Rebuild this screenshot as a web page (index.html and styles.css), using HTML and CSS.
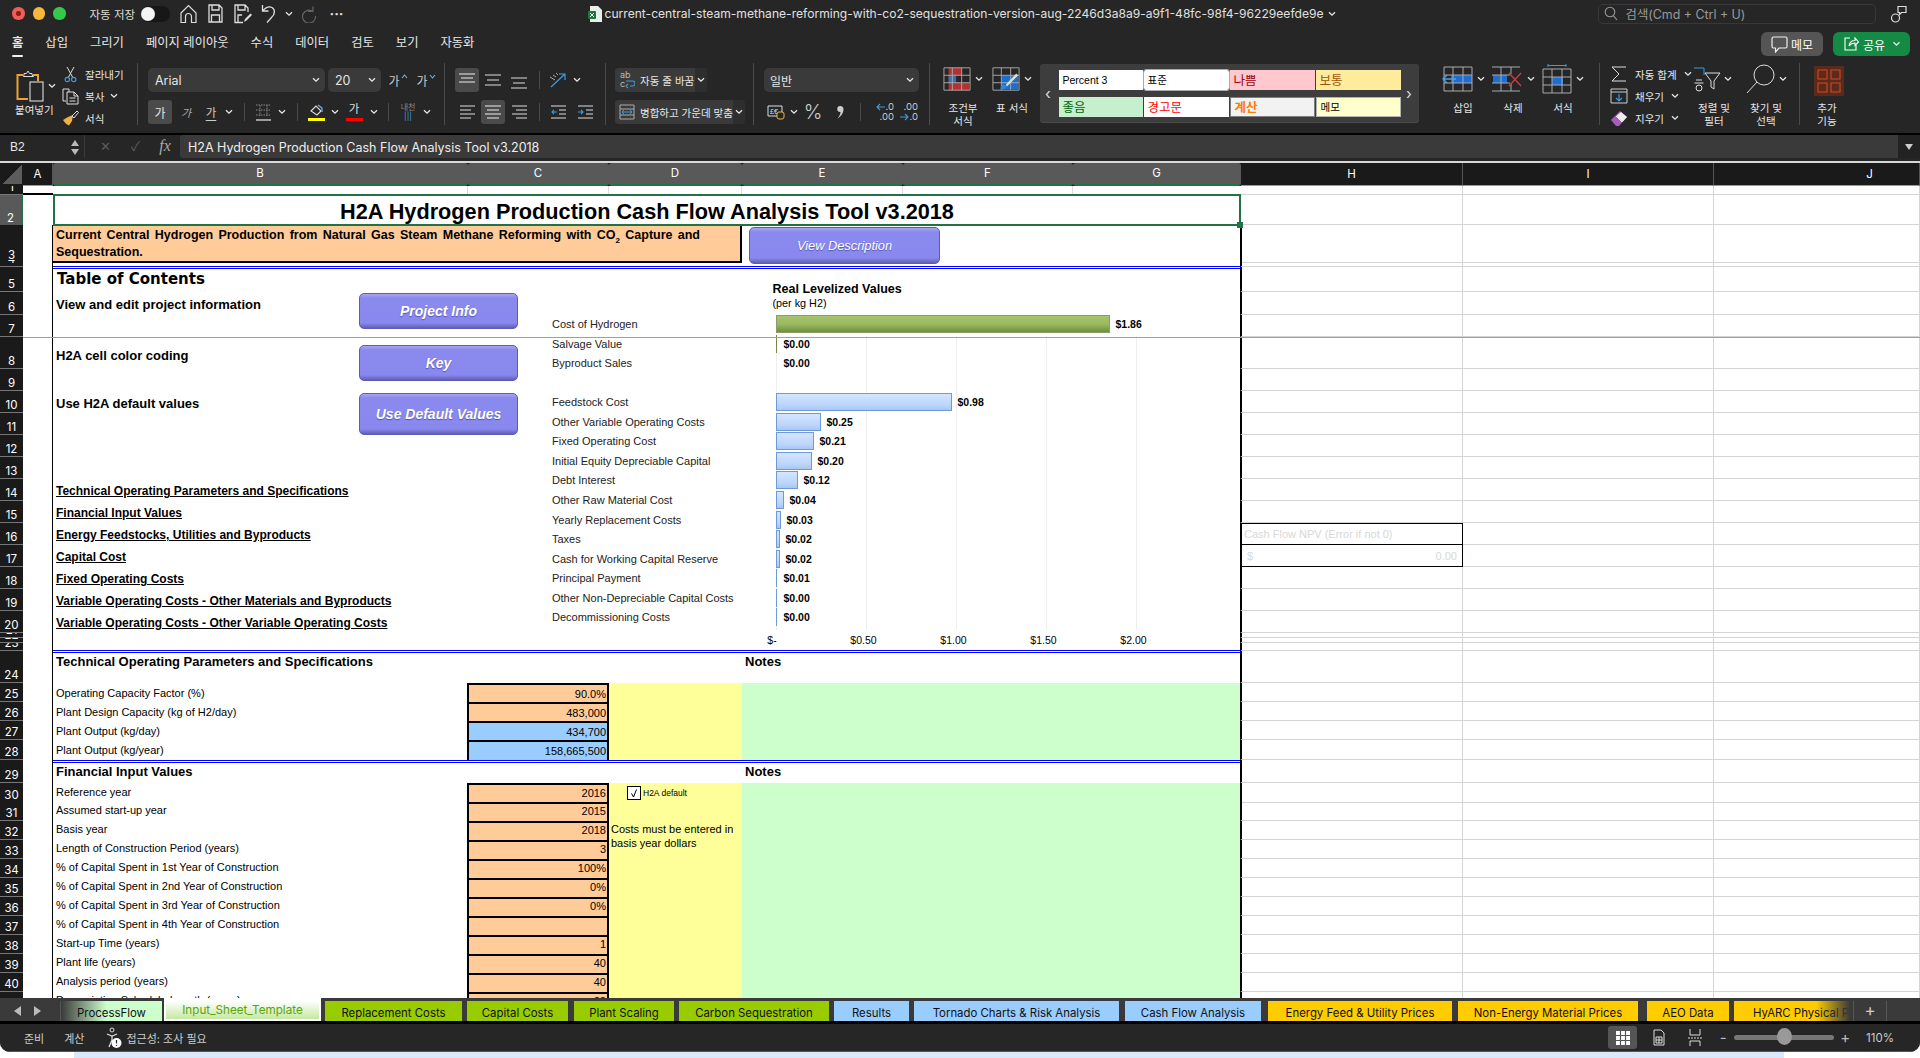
FILE: index.html
```html
<!DOCTYPE html>
<html lang="ko">
<head>
<meta charset="utf-8">
<title>H2A Hydrogen Production Cash Flow Analysis Tool</title>
<link rel="stylesheet" href="styles.css">
</head>
<body>
<svg class="sprite" width="0" height="0">
  <symbol id="chev" viewBox="0 0 8 6"><path d="M1 1.2l3 3 3-3" fill="none" stroke="#e8e8e8" stroke-width="1.3"/></symbol>
</svg>
<div class="app">
  <header class="titlebar">
    <div class="lights"><span class="light red"></span><span class="light amber"></span><span class="light green"></span></div>
    <span class="autosave">자동 저장</span>
    <span class="toggle"><i></i></span>
    <span class="tool w26"><svg width="17" height="20" viewBox="0 0 17 20"><path d="M1 9L8.500 1.500 16 9v9.500h-4.500V12.500a3 3 0 0 0-6 0v6H1z" fill="none" stroke="#ddd" stroke-width="1.200"/></svg></span>
    <span class="tool w27"><svg width="15" height="19" viewBox="0 0 15 19"><path d="M1 1h10l3 3v14H1zM4 1v5h7V1M3.500 18v-7h8v7" fill="none" stroke="#ddd" stroke-width="1.300"/></svg></span>
    <span class="tool w28"><svg width="18" height="20" viewBox="0 0 18 20"><path d="M9 18.500H1V1h10l3 3v4M4 1v5h7V1M4 18v-7h4" fill="none" stroke="#ddd" stroke-width="1.300"/><path d="M10 18l1-3 5.500-5.500 1.500 1.500-5.500 5.500z" fill="#ddd"/></svg></span>
    <span class="tool w24"><svg width="15" height="20" viewBox="0 0 15 20"><path d="M1.500 1v6h6M1.500 7C5 3 8 1.800 11 3.500c3.500 2 3 7-.5 10L6 18.500" fill="none" stroke="#ddd" stroke-width="1.300"/></svg></span>
    <span class="tool w16"><svg class="ch" width="8" height="6"><use href="#chev"/></svg></span>
    <span class="tool w26"><svg width="15" height="18" viewBox="0 0 15 18"><path d="M11 1.500v5H6M11 6.500A6.500 6.500 0 1 0 13.500 11" fill="none" stroke="#666" stroke-width="1.200"/></svg></span>
    <span class="tool w28 dots">···</span>
    <div class="doc">
      <svg class="ch" width="15" height="18" viewBox="0 0 15 18"><path d="M2 1h8l4 4v12H2z" fill="#e8efe9"/><rect x="0" y="6" width="8" height="8" rx="1" fill="#217346"/><path d="M2 8l4 4M6 8l-4 4" stroke="#fff"/></svg>
      <span class="docname">current-central-steam-methane-reforming-with-co2-sequestration-version-aug-2246d3a8a9-a9f1-48fc-98f4-96229eefde9e</span>
      <svg class="ch" width="8" height="6"><use href="#chev"/></svg>
    </div>
    <div class="search">
      <svg class="ch" width="14" height="15" viewBox="0 0 14 15"><circle cx="6" cy="6" r="4.800" fill="none" stroke="#999" stroke-width="1.100"/><path d="M9.500 9.800l3.500 4.200" stroke="#999" stroke-width="1.100"/></svg>
      <span>검색(Cmd + Ctrl + U)</span>
    </div>
    <span class="tool w26 person"><svg width="18" height="20" viewBox="0 0 18 20"><circle cx="5.500" cy="14" r="4" fill="none" stroke="#ddd" stroke-width="1.200"/><path d="M8 2.500h8v6H11.500L9.500 10.500V8.500H8z" fill="none" stroke="#ddd" stroke-width="1.200"/></svg></span>
  </header>

  <nav class="tabs">
    <span class="rtab on">홈</span><span class="rtab">삽입</span><span class="rtab">그리기</span><span class="rtab">페이지 레이아웃</span><span class="rtab">수식</span><span class="rtab">데이터</span><span class="rtab">검토</span><span class="rtab">보기</span><span class="rtab">자동화</span>
    <div class="tabs-right">
      <span class="memo"><svg width="17" height="17" viewBox="0 0 17 17"><path d="M1 2.500A1.500 1.500 0 0 1 2.500 1h12A1.500 1.500 0 0 1 16 2.500v8A1.500 1.500 0 0 1 14.500 12H8l-3.500 4v-4h-2A1.500 1.500 0 0 1 1 10.500z" fill="none" stroke="#eee" stroke-width="1.200"/></svg>메모</span>
      <span class="share"><svg width="16" height="16" viewBox="0 0 16 16"><path d="M7 2H2v12h11V9M6 10c.5-3.500 3-5.500 6-5.500V2l3.500 4L12 9.500V7c-2.500 0-4.500 1-6 3z" fill="none" stroke="#fff" stroke-width="1.100"/></svg>공유<svg class="ch" width="9" height="6"><use href="#chev"/></svg></span>
    </div>
  </nav>

  <section class="ribbon">
    <div class="grp g-clip">
      <div class="paste">
        <div class="paste-ic">
          <svg width="30" height="33" viewBox="0 0 30 33"><path d="M7 5H1.500v24H12M17 5h5v6" fill="none" stroke="#f0a030" stroke-width="2"/><path d="M8 5V3.500h2.500L12 1l1.500 2.500H16V5l1.500 1.500h-10z" fill="none" stroke="#ddd" stroke-width="1"/><rect x="14" y="12" width="13" height="19" fill="#262626" stroke="#ddd" stroke-width="1.100"/></svg>
          <svg class="ch" width="8" height="6"><use href="#chev"/></svg>
        </div>
        <span class="lbl">붙여넣기</span>
      </div>
      <div class="clip-list">
        <div class="clip-item"><svg width="12" height="17" viewBox="0 0 12 17"><path d="M2.500 1L8 11M9.500 1L4 11" stroke="#ddd" stroke-width="1"/><circle cx="2.800" cy="13.500" r="2.200" fill="none" stroke="#3b9ce0" stroke-width="1.200"/><circle cx="9.200" cy="13.500" r="2.200" fill="none" stroke="#3b9ce0" stroke-width="1.200"/></svg><span>잘라내기</span></div>
        <div class="clip-item"><svg width="17" height="17" viewBox="0 0 17 17"><path d="M4 13H1V1h6v3M5 4h7l4 4v8H5zM12 4v4h4M7.500 10h6M7.500 13h6" fill="none" stroke="#ddd" stroke-width="1"/></svg><span>복사</span><svg class="ch" width="8" height="6"><use href="#chev"/></svg></div>
        <div class="clip-item"><svg width="17" height="16" viewBox="0 0 17 16"><path d="M11 5l-5 2-5 3c2 3 4 5 6 5.500l3-4.500z" fill="#f0b040"/><path d="M10 6l2 2 4.500-5.500L15 1z" fill="none" stroke="#ddd" stroke-width="1"/></svg><span>서식</span></div>
      </div>
    </div>
    <div class="grp g-font">
      <div class="grow">
        <span class="box w177"><span>Arial</span><svg class="ch" width="8" height="6"><use href="#chev"/></svg></span>
        <span class="box w53"><span>20</span><svg class="ch" width="8" height="6"><use href="#chev"/></svg></span>
        <span class="tool w28 g-ic">가<svg class="caret" width="7" height="5" viewBox="0 0 7 5"><path d="M1 4l2.500-3L6 4" fill="none" stroke="#6ab7f0" stroke-width="1.100"/></svg></span>
        <span class="tool w28 g-ic">가<svg class="caret" width="7" height="5" viewBox="0 0 7 5"><path d="M1 1l2.500 3L6 1" fill="none" stroke="#6ab7f0" stroke-width="1.100"/></svg></span>
      </div>
      <div class="grow">
        <span class="tool w24 act">가</span>
        <span class="tool w28 g-i">가</span>
        <span class="tool w22 g-u">가</span>
        <span class="tool w14"><svg class="ch" width="8" height="6"><use href="#chev"/></svg></span>
        <span class="vsep w16"></span>
        <span class="tool w22"><svg width="17" height="17" viewBox="0 0 17 17"><path d="M1 1h15M1 6h15M1 11h15M5 1v11M12 1v11" fill="none" stroke="#888" stroke-width="1" stroke-dasharray="1.500 1"/><path d="M1 16h15" stroke="#eee" stroke-width="1.200"/></svg></span>
        <span class="tool w16"><svg class="ch" width="8" height="6"><use href="#chev"/></svg></span>
        <span class="vsep w14"></span>
        <span class="tool w25 colorbtn"><svg width="14" height="12" viewBox="0 0 14 12"><path d="M1 7l5-5 5 5-4 4z" fill="none" stroke="#ddd" stroke-width="1.100"/><path d="M8 1l4 3v4" fill="none" stroke="#6ab7f0" stroke-width="1.200"/></svg><i class="bar yellow"></i></span>
        <span class="tool w12"><svg class="ch" width="8" height="6"><use href="#chev"/></svg></span>
        <span class="tool w26 colorbtn font-c"><b>가</b><i class="bar redbar"></i></span>
        <span class="tool w13"><svg class="ch" width="8" height="6"><use href="#chev"/></svg></span>
        <span class="vsep w16"></span>
        <span class="tool w24 phon">내천<em>|||</em></span>
        <span class="tool w13"><svg class="ch" width="8" height="6"><use href="#chev"/></svg></span>
      </div>
    </div>
    <div class="grp g-align">
      <div class="grow">
        <span class="tool w24 act"><svg width="16" height="14" viewBox="0 0 16 14"><path d="M0 1h16M2 5h12M0 9h16" stroke="#eee"/></svg></span>
        <span class="tool w27"><svg width="16" height="12" viewBox="0 0 16 12"><path d="M0 1h16M2 6h12M0 11h16" stroke="#ddd"/></svg></span>
        <span class="tool w26"><svg class="dn" width="16" height="12" viewBox="0 0 16 12"><path d="M0 1h16M2 6h12M0 11h16" stroke="#ddd"/></svg></span>
        <span class="vsep w14"></span>
        <span class="tool w24"><svg width="18" height="16" viewBox="0 0 18 16"><path d="M2 15L16 2M10 2h6v6" fill="none" stroke="#3b9ce0" stroke-width="1.200"/><path d="M1 5l5 3M4 3l3 2M7 1l2 2" stroke="#aaa"/></svg></span>
        <span class="tool w14"><svg class="ch" width="8" height="6"><use href="#chev"/></svg></span>
      </div>
      <div class="grow">
        <span class="tool w26"><svg width="16" height="14" viewBox="0 0 16 14"><path d="M0 1h15M0 5h11M0 9h15M0 13h11" stroke="#ddd"/></svg></span>
        <span class="tool w24 act"><svg width="16" height="14" viewBox="0 0 16 14"><path d="M0 1h16M2 5h12M0 9h16M2 13h12" stroke="#eee"/></svg></span>
        <span class="tool w27"><svg width="16" height="14" viewBox="0 0 16 14"><path d="M1 1h15M5 5h11M1 9h15M5 13h11" stroke="#ddd"/></svg></span>
        <span class="vsep w14"></span>
        <span class="tool w26"><svg width="16" height="14" viewBox="0 0 16 14"><path d="M0 1h15M8 5h7M8 9h7M0 13h15" stroke="#ddd"/><path d="M6 7H1M3 5L1 7l2 2" fill="none" stroke="#3b9ce0" stroke-width="1.100"/></svg></span>
        <span class="tool w26"><svg width="16" height="14" viewBox="0 0 16 14"><path d="M1 1h15M9 5h7M9 9h7M1 13h15" stroke="#ddd"/><path d="M1 7h5M4 5l2 2-2 2" fill="none" stroke="#3b9ce0" stroke-width="1.100"/></svg></span>
      </div>
    </div>
    <div class="grp g-wrap">
      <div class="grow">
        <span class="box2 w92">
          <svg width="15" height="17" viewBox="0 0 15 17"><path d="M10 13h2.500a2.500 2.500 0 0 0 0-5H6M8 11l-2 2 2 2" fill="none" stroke="#3b9ce0" stroke-width="1.100"/></svg>
          <span class="ab">ab<br>c</span>
          <span class="btxt">자동 줄 바꿈</span><span class="chw"><svg class="ch" width="8" height="6"><use href="#chev"/></svg></span>
        </span>
      </div>
      <div class="grow">
        <span class="box2 w127">
          <svg class="mrg" width="16" height="16" viewBox="0 0 16 16"><path d="M1 1h14v14H1zM1 5h14M1 11h14" fill="none" stroke="#aaa"/><path d="M3 8h10M5 6L3 8l2 2M11 6l2 2-2 2" fill="none" stroke="#3b9ce0"/></svg>
          <span class="btxt">병합하고 가운데 맞춤</span><span class="chw"><svg class="ch" width="8" height="6"><use href="#chev"/></svg></span>
        </span>
      </div>
    </div>
    <div class="grp g-num">
      <div class="grow">
        <span class="box w155"><span class="kr">일반</span><svg class="ch" width="8" height="6"><use href="#chev"/></svg></span>
      </div>
      <div class="grow">
        <span class="tool w24"><svg width="18" height="16" viewBox="0 0 18 16"><path d="M1 2h14v10H1z" fill="none" stroke="#ddd"/><text class="svgt" x="3" y="10">£€</text><rect x="10" y="8" width="7" height="7" rx="2" fill="#262626" stroke="#e8b840"/></svg></span>
        <span class="tool w12"><svg class="ch" width="8" height="6"><use href="#chev"/></svg></span>
        <span class="tool w26 pct">%</span>
        <span class="tool w28"><svg width="8" height="14" viewBox="0 0 8 14"><path d="M4 1a3 3 0 0 1 3.500 3c0 4-2.500 7.500-6 9.500C3.500 11 4.500 9 4.500 7A3 3 0 0 1 4 1z" fill="#ccc"/></svg></span>
        <span class="vsep w12"></span>
        <span class="tool w28 dec"><span class="dr"><svg width="11" height="8" viewBox="0 0 11 8"><path d="M10 4H2M5 1L2 4l3 3" fill="none" stroke="#3b9ce0" stroke-width="1.100"/></svg>.0</span><span>.00</span></span>
        <span class="tool w24 dec"><span>.00</span><span class="dr"><svg width="11" height="8" viewBox="0 0 11 8"><path d="M1 4h8M6 1l3 3-3 3" fill="none" stroke="#3b9ce0" stroke-width="1.100"/></svg>.0</span></span>
      </div>
    </div>
    <div class="grp g-style">
      <div class="col40">
        <div class="big-ic"><svg width="30" height="26" viewBox="0 0 30 26"><path d="M6 1h14v8h-6v8h14v8H6z" fill="#b23232"/><rect x="6" y="9" width="8" height="8" fill="#2e75b6"/><path d="M1 1h28v24H1zM1 9h28M1 17h28M10 1v24M20 1v24" fill="none" stroke="#aaa"/></svg><svg class="ch" width="8" height="6"><use href="#chev"/></svg></div>
        <span class="lbl">조건부<br>서식</span>
      </div>
      <div class="col40">
        <div class="big-ic"><svg width="30" height="26" viewBox="0 0 30 26"><rect x="10" y="9" width="18" height="15" fill="#1c6fd0"/><path d="M1 1h28v24H1zM1 9h28M1 17h28M10 1v24M20 1v24" fill="none" stroke="#aaa"/><path d="M9 24c0-5 4-6 6-4 1 2-1 5-6 4z" fill="#2e86d6"/><path d="M15 19L26 7l2 2-12 12" fill="#ddd"/></svg><svg class="ch" width="8" height="6"><use href="#chev"/></svg></div>
        <span class="lbl">표 서식</span>
      </div>
    </div>
    <div class="gallery">
      <span class="gal-arrow">‹</span>
      <div class="gal-grid">
        <span class="st st-a">Percent 3</span>
        <span class="st st-sel">표준</span>
        <span class="st st-bad">나쁨</span>
        <span class="st st-neu">보통</span>
        <span class="st st-good">좋음</span>
        <span class="st st-warn">경고문</span>
        <span class="st st-calc">계산</span>
        <span class="st st-note">메모</span>
      </div>
      <span class="gal-arrow">›</span>
    </div>
    <div class="grp g-cells">
      <div class="col50">
        <div class="big-ic"><svg width="31" height="26" viewBox="0 0 31 26"><rect x="9" y="9" width="21" height="8" fill="#1c6fd0"/><path d="M2 1h28v24H2zM2 9h28M2 17h28M11 1v24M21 1v24" fill="none" stroke="#aaa"/><path d="M14 13H1M5 9l-4 4 4 4" fill="none" stroke="#4da3e8" stroke-width="1.300"/></svg><svg class="ch" width="8" height="6"><use href="#chev"/></svg></div>
        <span class="lbl">삽입</span>
      </div>
      <div class="col50">
        <div class="big-ic"><svg width="32" height="26" viewBox="0 0 32 26"><rect x="2" y="9" width="14" height="8" fill="#1c6fd0"/><path d="M1 1h28M1 9h18M1 17h18M1 25h28M10 1v24M20 1v7M20 18v7" fill="none" stroke="#aaa"/><path d="M18 7l12 13M30 7L18 20" stroke="#d04040" stroke-width="1.200"/></svg><svg class="ch" width="8" height="6"><use href="#chev"/></svg></div>
        <span class="lbl">삭제</span>
      </div>
      <div class="col50">
        <div class="big-ic"><svg width="30" height="30" viewBox="0 0 30 30"><path d="M6 1.500h18M6 0v3M24 0v3" stroke="#3b9ce0"/><rect x="10" y="13" width="11" height="8" fill="#1c6fd0"/><path d="M1 5h28v24H1zM1 13h28M1 21h28M10 5v24M20 5v24" fill="none" stroke="#aaa"/></svg><svg class="ch" width="8" height="6"><use href="#chev"/></svg></div>
        <span class="lbl">서식</span>
      </div>
    </div>
    <div class="grp g-edit">
      <div class="edit-list">
        <div class="edit-item"><svg width="18" height="16" viewBox="0 0 18 16"><path d="M16 1H2l7 7-7 7h14" fill="none" stroke="#ddd"/></svg><span>자동 합계</span><svg class="ch" width="8" height="6"><use href="#chev"/></svg></div>
        <div class="edit-item"><svg width="18" height="16" viewBox="0 0 18 16"><path d="M1 1h16v14H1zM1 4h16" fill="none" stroke="#ccc"/><path d="M9 6v7M6 10l3 3 3-3" fill="none" stroke="#3b9ce0" stroke-width="1.200"/></svg><span>채우기</span><svg class="ch" width="8" height="6"><use href="#chev"/></svg></div>
        <div class="edit-item"><svg width="18" height="17" viewBox="0 0 18 17"><path d="M1 10L10 1l7 6-8 9H6z" fill="#a85cc0"/><path d="M6 6l6 6" stroke="#eee"/><path d="M11 2l6 5-4.500 5-6-6z" fill="#eee"/></svg><span>지우기</span><svg class="ch" width="8" height="6"><use href="#chev"/></svg></div>
      </div>
      <div class="col42">
        <div class="big-ic"><svg width="28" height="28" viewBox="0 0 28 28"><path d="M1 3h10v7" fill="none" stroke="#3b9ce0"/><path d="M12 8h15l-6 8v8l-3-2v-6z" fill="none" stroke="#ddd"/><path d="M3 15h6M1.500 18h9" stroke="#ddd"/><circle cx="6" cy="23" r="3" fill="none" stroke="#ddd"/></svg><svg class="ch" width="8" height="6"><use href="#chev"/></svg></div>
        <span class="lbl">정렬 및<br>필터</span>
      </div>
      <div class="col42 find">
        <div class="big-ic"><svg width="30" height="30" viewBox="0 0 30 30"><circle cx="18" cy="11" r="10" fill="none" stroke="#ddd"/><path d="M11 18L1 29" stroke="#ddd"/></svg><svg class="ch" width="8" height="6"><use href="#chev"/></svg></div>
        <span class="lbl">찾기 및<br>선택</span>
      </div>
    </div>
    <div class="grp g-add">
      <div class="col50">
        <svg class="addin" width="30" height="30" viewBox="0 0 30 30"><rect width="30" height="30" rx="1" fill="#5a2a1c"/><path d="M4 4h9v9H4zM17 4h9v9h-9zM4 17h9v9H4zM17 17h9v9h-9z" fill="none" stroke="#d04a20" stroke-width="1.100"/></svg>
        <span class="lbl">추가<br>기능</span>
      </div>
    </div>
  </section>

  <div class="formula">
    <div class="namebox"><span>B2</span><span class="stepper"><i class="up"></i><i class="down"></i></span></div>
    <span class="fx-x">✕</span><span class="fx-ok">✓</span><span class="fx">fx</span>
    <div class="finput"><span class="ftext">H2A Hydrogen Production Cash Flow Analysis Tool v3.2018</span><span class="fexpand"></span></div>
  </div>

  <main class="sheet">
    <div class="row colhead">
      <div class="corner"></div>
      <div class="ch-k">A</div><div class="ch-k act">B</div><div class="ch-k act">C</div><div class="ch-k act">D</div><div class="ch-k act">E</div><div class="ch-k act">F</div><div class="ch-k act">G</div><div class="ch-k">H</div><div class="ch-k">I</div><div class="ch-k ch-j">J</div>
    </div>

    <div class="row r9"><div class="rh">1</div><div class="a a-end"></div><div class="cB gridr"></div><div class="cC gridr"></div><div class="cD gridr"></div><div class="cE gridr"></div><div class="cF gridr"></div><div class="cG"></div><div class="gh nb"></div><div class="gi"></div><div class="gj"></div></div>
    <div class="row r30"><div class="rh sel">2</div><div class="a noline"></div><div class="cBG title">H2A Hydrogen Production Cash Flow Analysis Tool v3.2018</div><div class="gh nb"></div><div class="gi"></div><div class="gj"></div></div>
    <div class="row r35"><div class="rh">3</div><div class="a"></div><div class="cBD subtitle"><span>Current Central Hydrogen Production from Natural Gas Steam Methane Reforming with CO<sub>2</sub> Capture and Sequestration.</span></div><div class="gh"></div><div class="gi"></div><div class="gj"></div></div>
    <div class="row r7"><div class="rh">4</div><div class="a"></div><div class="gh"></div><div class="gi"></div><div class="gj"></div></div>
    <div class="row r25"><div class="rh">5</div><div class="a"></div><div class="cBG dbl toc">Table of Contents</div><div class="gh"></div><div class="gi"></div><div class="gj"></div></div>
    <div class="row r23"><div class="rh">6</div><div class="a"></div><div class="cB bold">View and edit project information</div><div class="gh"></div><div class="gi"></div><div class="gj"></div></div>
    <div class="row r22"><div class="rh">7</div><div class="a"></div><div class="gh"></div><div class="gi"></div><div class="gj"></div></div>
    <div class="row r32"><div class="rh">8</div><div class="a"></div><div class="cB bold lift">H2A cell color coding</div><div class="gh"></div><div class="gi"></div><div class="gj"></div></div>
    <div class="row r22"><div class="rh">9</div><div class="a"></div><div class="gh"></div><div class="gi"></div><div class="gj"></div></div>
    <div class="row r22"><div class="rh">10</div><div class="a"></div><div class="cB bold">Use H2A default values</div><div class="gh"></div><div class="gi"></div><div class="gj"></div></div>
    <div class="row r22"><div class="rh">11</div><div class="a"></div><div class="gh"></div><div class="gi"></div><div class="gj"></div></div>
    <div class="row r22"><div class="rh">12</div><div class="a"></div><div class="gh"></div><div class="gi"></div><div class="gj"></div></div>
    <div class="row r22"><div class="rh">13</div><div class="a"></div><div class="gh"></div><div class="gi"></div><div class="gj"></div></div>
    <div class="row r22"><div class="rh">14</div><div class="a"></div><div class="cB link">Technical Operating Parameters and Specifications</div><div class="gh"></div><div class="gi"></div><div class="gj"></div></div>
    <div class="row r22"><div class="rh">15</div><div class="a"></div><div class="cB link">Financial Input Values</div><div class="gh"></div><div class="gi"></div><div class="gj"></div></div>
    <div class="row r22"><div class="rh">16</div><div class="a"></div><div class="cB link">Energy Feedstocks, Utilities and Byproducts</div><div class="gh npv-t">Cash Flow NPV (Error if not 0)</div><div class="gi"></div><div class="gj"></div></div>
    <div class="row r22"><div class="rh">17</div><div class="a"></div><div class="cB link">Capital Cost</div><div class="gh npv-v"><span>$</span><span>0.00</span></div><div class="gi"></div><div class="gj"></div></div>
    <div class="row r22"><div class="rh">18</div><div class="a"></div><div class="cB link">Fixed Operating Costs</div><div class="gh"></div><div class="gi"></div><div class="gj"></div></div>
    <div class="row r22"><div class="rh">19</div><div class="a"></div><div class="cB link">Variable Operating Costs - Other Materials and Byproducts</div><div class="gh"></div><div class="gi"></div><div class="gj"></div></div>
    <div class="row r22"><div class="rh">20</div><div class="a"></div><div class="cB link">Variable Operating Costs - Other Variable Operating Costs</div><div class="gh"></div><div class="gi"></div><div class="gj"></div></div>
    <div class="row r5"><div class="rh">21</div><div class="a"></div><div class="gh"></div><div class="gi"></div><div class="gj"></div></div>
    <div class="row r5"><div class="rh">22</div><div class="a"></div><div class="gh"></div><div class="gi"></div><div class="gj"></div></div>
    <div class="row r8"><div class="rh">23</div><div class="a"></div><div class="gh"></div><div class="gi"></div><div class="gj"></div></div>
    <div class="row r32"><div class="rh">24</div><div class="a"></div><div class="cB dbl bold sect">Technical Operating Parameters and Specifications</div><div class="cC dbl"></div><div class="cD dbl"></div><div class="cEG-n dbl bold sect">Notes</div><div class="gh"></div><div class="gi"></div><div class="gj"></div></div>
    <div class="row r19"><div class="rh">25</div><div class="a"></div><div class="cB">Operating Capacity Factor (%)</div><div class="cC inp">90.0%</div><div class="cD ye"></div><div class="cEG gr"></div><div class="gh"></div><div class="gi"></div><div class="gj"></div></div>
    <div class="row r19"><div class="rh">26</div><div class="a"></div><div class="cB">Plant Design Capacity (kg of H2/day)</div><div class="cC inp">483,000</div><div class="cD ye"></div><div class="cEG gr"></div><div class="gh"></div><div class="gi"></div><div class="gj"></div></div>
    <div class="row r19"><div class="rh">27</div><div class="a"></div><div class="cB">Plant Output (kg/day)</div><div class="cC inp calc">434,700</div><div class="cD ye"></div><div class="cEG gr"></div><div class="gh"></div><div class="gi"></div><div class="gj"></div></div>
    <div class="row r20"><div class="rh">28</div><div class="a"></div><div class="cB">Plant Output (kg/year)</div><div class="cC inp calc">158,665,500</div><div class="cD ye"></div><div class="cEG gr"></div><div class="gh"></div><div class="gi"></div><div class="gj"></div></div>
    <div class="row r23"><div class="rh">29</div><div class="a"></div><div class="cB dbl0 bold fin">Financial Input Values</div><div class="cC dbl0"></div><div class="cD dbl0"></div><div class="cEG-n dbl0 bold fin">Notes</div><div class="gh"></div><div class="gi"></div><div class="gj"></div></div>
    <div class="row r19 f"><div class="rh">30</div><div class="a"></div><div class="cB">Reference year</div><div class="cC inp">2016</div><div class="cD ye"><span class="check"><svg width="10" height="10" viewBox="0 0 10 10"><path d="M2.500 5.500L4.500 9 7.500 1.500" fill="none" stroke="#000" stroke-width="1"/></svg></span><span class="chk-l">H2A default</span></div><div class="cEG gr"></div><div class="gh"></div><div class="gi"></div><div class="gj"></div></div>
    <div class="row r19 f"><div class="rh">31</div><div class="a"></div><div class="cB">Assumed start-up year</div><div class="cC inp">2015</div><div class="cD ye"></div><div class="cEG gr"></div><div class="gh"></div><div class="gi"></div><div class="gj"></div></div>
    <div class="row r19 f"><div class="rh">32</div><div class="a"></div><div class="cB">Basis year</div><div class="cC inp">2018</div><div class="cD ye">Costs must be entered in</div><div class="cEG gr"></div><div class="gh"></div><div class="gi"></div><div class="gj"></div></div>
    <div class="row r19 f"><div class="rh">33</div><div class="a"></div><div class="cB">Length of Construction Period (years)</div><div class="cC inp">3</div><div class="cD ye note-b">basis year dollars</div><div class="cEG gr"></div><div class="gh"></div><div class="gi"></div><div class="gj"></div></div>
    <div class="row r19 f"><div class="rh">34</div><div class="a"></div><div class="cB">% of Capital Spent in 1st Year of Construction</div><div class="cC inp">100%</div><div class="cD ye"></div><div class="cEG gr"></div><div class="gh"></div><div class="gi"></div><div class="gj"></div></div>
    <div class="row r19 f"><div class="rh">35</div><div class="a"></div><div class="cB">% of Capital Spent in 2nd Year of Construction</div><div class="cC inp">0%</div><div class="cD ye"></div><div class="cEG gr"></div><div class="gh"></div><div class="gi"></div><div class="gj"></div></div>
    <div class="row r19 f"><div class="rh">36</div><div class="a"></div><div class="cB">% of Capital Spent in 3rd Year of Construction</div><div class="cC inp">0%</div><div class="cD ye"></div><div class="cEG gr"></div><div class="gh"></div><div class="gi"></div><div class="gj"></div></div>
    <div class="row r19 f"><div class="rh">37</div><div class="a"></div><div class="cB">% of Capital Spent in 4th Year of Construction</div><div class="cC inp"></div><div class="cD ye"></div><div class="cEG gr"></div><div class="gh"></div><div class="gi"></div><div class="gj"></div></div>
    <div class="row r19 f"><div class="rh">38</div><div class="a"></div><div class="cB">Start-up Time (years)</div><div class="cC inp">1</div><div class="cD ye"></div><div class="cEG gr"></div><div class="gh"></div><div class="gi"></div><div class="gj"></div></div>
    <div class="row r19 f"><div class="rh">39</div><div class="a"></div><div class="cB">Plant life (years)</div><div class="cC inp">40</div><div class="cD ye"></div><div class="cEG gr"></div><div class="gh"></div><div class="gi"></div><div class="gj"></div></div>
    <div class="row r19 f"><div class="rh">40</div><div class="a"></div><div class="cB">Analysis period (years)</div><div class="cC inp">40</div><div class="cD ye"></div><div class="cEG gr"></div><div class="gh"></div><div class="gi"></div><div class="gj"></div></div>
    <div class="row r19 f"><div class="rh">41</div><div class="a"></div><div class="cB">Depreciation Schedule Length (years)</div><div class="cC inp">20</div><div class="cD ye"></div><div class="cEG gr"></div><div class="gh"></div><div class="gi"></div><div class="gj"></div></div>

    <!-- floating objects on the worksheet -->
    <div class="selection"><i></i></div>
    <button class="xbtn b-view">View Description</button>
    <button class="xbtn strong b-proj">Project Info</button>
    <button class="xbtn strong b-key">Key</button>
    <button class="xbtn strong b-def">Use Default Values</button>

    <div class="chart">
      <div class="chart-title"><b>Real Levelized Values</b><span>(per kg H2)</span></div>
      <div class="plot">
        <div class="bar-row"><span class="bl">Cost of Hydrogen</span><i class="b green" style="width:334px"></i><b>$1.86</b></div>
        <div class="bar-row"><span class="bl">Salvage Value</span><i class="b thin-g"></i><b>$0.00</b></div>
        <div class="bar-row"><span class="bl">Byproduct Sales</span><i class="b none"></i><b>$0.00</b></div>
        <div class="bar-row"></div>
        <div class="bar-row"><span class="bl">Feedstock Cost</span><i class="b" style="width:176px"></i><b>$0.98</b></div>
        <div class="bar-row"><span class="bl">Other Variable Operating Costs</span><i class="b" style="width:45px"></i><b>$0.25</b></div>
        <div class="bar-row"><span class="bl">Fixed Operating Cost</span><i class="b" style="width:38px"></i><b>$0.21</b></div>
        <div class="bar-row"><span class="bl">Initial Equity Depreciable Capital</span><i class="b" style="width:36px"></i><b>$0.20</b></div>
        <div class="bar-row"><span class="bl">Debt Interest</span><i class="b" style="width:22px"></i><b>$0.12</b></div>
        <div class="bar-row"><span class="bl">Other Raw Material Cost</span><i class="b" style="width:8px"></i><b>$0.04</b></div>
        <div class="bar-row"><span class="bl">Yearly Replacement Costs</span><i class="b" style="width:5px"></i><b>$0.03</b></div>
        <div class="bar-row"><span class="bl">Taxes</span><i class="b" style="width:4px"></i><b>$0.02</b></div>
        <div class="bar-row"><span class="bl">Cash for Working Capital Reserve</span><i class="b" style="width:4px"></i><b>$0.02</b></div>
        <div class="bar-row"><span class="bl">Principal Payment</span><i class="b thin-b"></i><b>$0.01</b></div>
        <div class="bar-row"><span class="bl">Other Non-Depreciable Capital Costs</span><i class="b thin-b"></i><b>$0.00</b></div>
        <div class="bar-row"><span class="bl">Decommissioning Costs</span><i class="b thin-b"></i><b>$0.00</b></div>
      </div>
      <div class="axis"><span>$-</span><span>$0.50</span><span>$1.00</span><span>$1.50</span><span>$2.00</span></div>
    </div>
    <div class="freeze"></div>
  </main>

  <div class="sheet-tabs">
    <div class="nav"><span class="tri-l"></span><span class="tri-r"></span></div>
    <span class="stab pf">ProcessFlow</span>
    <div class="stab-wrap"><span class="stab active">Input_Sheet_Template</span></div>
    <span class="stab lime t-rep">Replacement Costs</span>
    <span class="stab lime t-cap">Capital Costs</span>
    <span class="stab lime t-pla">Plant Scaling</span>
    <span class="stab lime t-car">Carbon Sequestration</span>
    <span class="stab sky t-res">Results</span>
    <span class="stab sky t-tor">Tornado Charts &amp; Risk Analysis</span>
    <span class="stab sky t-cas">Cash Flow Analysis</span>
    <span class="stab gold t-ene">Energy Feed &amp; Utility Prices</span>
    <span class="stab gold t-non">Non-Energy Material Prices</span>
    <span class="stab gold t-aeo">AEO Data</span>
    <span class="stab gold t-hya">HyARC Physical Property Data<i class="fade"></i></span>
    <span class="plus">+</span>
  </div>

  <footer class="status">
    <span class="s-ready">준비</span><span class="s-calc">계산</span>
    <svg class="s-ic" width="16" height="22" viewBox="0 0 16 22"><circle cx="6" cy="3" r="2" fill="none" stroke="#ddd"/><path d="M1 7l5 2 5-2M6 9v4l-3 7M6 13l2 3" fill="none" stroke="#ddd" stroke-width="1.300"/><circle cx="10.500" cy="16" r="5" fill="#fff"/><path d="M10.500 13v3.500M10.500 18v1" stroke="#222" stroke-width="1.200"/></svg>
    <span class="s-acc">접근성: 조사 필요</span>
    <div class="s-right">
      <span class="view on"><svg width="16" height="16" viewBox="0 0 16 16"><path d="M1 1h14v14H1z" fill="#fff"/><path d="M5.500 1v14M10.500 1v14M1 5.500h14M1 10.500h14" stroke="#555" stroke-width="1.200"/></svg></span>
      <span class="view"><svg width="12" height="17" viewBox="0 0 12 17"><path d="M1 1h7l3 3v12H1zM3 8h6v6H3zM3 11h6M6 8v6" fill="none" stroke="#ddd"/></svg></span>
      <span class="view"><svg width="14" height="17" viewBox="0 0 14 17"><path d="M2 0v6h10V0M2 17v-5h10v5" fill="none" stroke="#ddd"/><path d="M0 9h14" stroke="#ddd" stroke-dasharray="2 1"/></svg></span>
      <span class="zm">-</span>
      <span class="slider"><i></i></span>
      <span class="zm">+</span>
      <span class="pctz">110%</span>
    </div>
  </footer>
</div>
</body>
</html>
```

FILE: styles.css
```css
* { box-sizing: border-box; }
html, body { margin: 0; padding: 0; width: 1920px; height: 1058px; overflow: hidden; }
body {
  background: linear-gradient(90deg, #fff 74px, #d9e9fb 74px, #d9e9fb 1784px, #fff 1784px);
  font-family: "Liberation Sans", Arial, sans-serif;
}
.sprite { position: absolute; }
.app {
  width: 1920px; height: 1052px; background: #262626; color: #e6e6e6;
  border-radius: 0 0 10px 10px; overflow: hidden;
  font-family: Inter, "Noto Sans CJK KR", sans-serif; display: flex; flex-direction: column;
}
.ch { flex: none; }

/* utility widths for ribbon slots */
.tool { display: inline-flex; align-items: center; justify-content: center; flex: none; height: 24px; }
.w12 { width: 12px; } .w13 { width: 13px; } .w14 { width: 14px; } .w16 { width: 16px; }
.w22 { width: 22px; } .w24 { width: 24px; } .w25 { width: 25px; } .w26 { width: 26px; }
.w27 { width: 27px; } .w28 { width: 28px; } .w53 { width: 53px; } .w92 { width: 92px; }
.w127 { width: 127px; } .w155 { width: 155px; } .w177 { width: 177px; }

/* title bar */
.titlebar { height: 27px; display: flex; align-items: center; flex: none; font-size: 12px; }
.lights { display: flex; gap: 8px; margin-left: 12px; }
.light { width: 12.500px; height: 12.500px; border-radius: 50%; position: relative; }
.light.red { background: #ee5f58; }
.light.red::after { content: ""; position: absolute; left: 4px; top: 4px; width: 4.500px; height: 4.500px; border-radius: 50%; background: #8f1a16; }
.light.amber { background: #f6b73c; }
.light.green { background: #36c84b; }
.autosave { margin-left: 24px; font-size: 11.500px; color: #ddd; width: 51px; }
.toggle { width: 29px; height: 16px; border-radius: 8px; background: #171717; display: block; position: relative; }
.toggle i { position: absolute; left: 0; top: 1px; width: 14px; height: 14px; border-radius: 50%; background: #f4f4f4; }
.titlebar .toggle + .tool { margin-left: 6px; }
.dots { color: #ddd; font-weight: 700; font-size: 14px; }
.doc { width: 749px; margin-left: 237px; display: flex; align-items: center; }
.docname { font-size: 12.100px; color: #e0e0e0; white-space: nowrap; padding-left: 2px; }
.doc .ch:last-child { margin-left: 4px; }
.search { margin-left: 261px; width: 278px; height: 20px; border: 1px solid #383838; border-radius: 5px; display: flex; align-items: center; gap: 8px; padding-left: 5px; color: #9a9a9a; font-size: 12.400px; }
.person { margin-left: 10px; }

/* tabs */
.tabs { height: 31px; display: flex; align-items: center; gap: 22px; padding: 1px 10px 0 12px; flex: none; font-size: 12.300px; }
.rtab { position: relative; line-height: 18px; color: #e6e6e6; white-space: nowrap; }
.rtab.on { font-weight: 700; }
.rtab.on::after { content: ""; position: absolute; left: 0; right: 0; bottom: -5px; height: 2.500px; border-radius: 2px; background: #f0f0f0; }
.tabs-right { margin-left: auto; display: flex; gap: 10px; margin-top: 2px; }
.memo, .share { height: 24px; border-radius: 6px; display: flex; align-items: center; font-size: 12px; color: #fff; }
.memo { width: 62px; background: #555; padding-left: 10px; gap: 3px; }
.share { width: 77px; background: #158a45; padding-left: 10px; gap: 4px; }
.share .ch { margin-left: 3px; }

/* ribbon */
.ribbon { height: 77px; display: flex; flex: none; padding-top: 5px; border-bottom: 2px solid #000; }
.grp { height: 63px; position: relative; flex: none; }
.grp::after { content: ""; position: absolute; right: 0; top: 0; width: 1px; height: 62px; background: #4a4a4a; }
.grow { display: flex; align-items: center; height: 24px; margin-top: 5px; }
.grow + .grow { margin-top: 8px; }
.g-clip { width: 138px; display: flex; }
.paste { width: 62px; padding-left: 15px; }
.paste-ic { display: flex; align-items: center; gap: 2px; height: 36px; margin-top: 5px; margin-left: 1px; }
.lbl { display: block; font-size: 10.500px; line-height: 13px; color: #e6e6e6; white-space: nowrap; text-align: center; }
.paste .lbl { text-align: left; }
.clip-list { display: flex; flex-direction: column; }
.clip-item { display: flex; align-items: center; flex: none; height: 22px; gap: 6px; font-size: 10.500px; }
.clip-item > svg:first-child { width: 17px; }
.g-font { width: 307px; padding-left: 10px; font-size: 12px; }
.box { background: #3a3a3a; border-radius: 5px; height: 24px; display: flex; align-items: center; justify-content: space-between; padding: 0 5px 0 7px; margin-right: 3px; font-size: 12.500px; flex: none; }
.kr { font-size: 12px; }
.g-ic { color: #ccc; font-size: 12px; gap: 1px; }
.caret { margin-bottom: 8px; }
.act { background: #4a4a4a; border-radius: 3px; }
.g-i { font-style: italic; color: #aaa; font-size: 11px; }
.g-u { text-decoration: underline; text-underline-offset: 3px; color: #ccc; font-size: 11.500px; }
.vsep { height: 18px; display: inline-flex; justify-content: center; flex: none; }
.vsep::before { content: ""; width: 1px; background: #4a4a4a; }
.colorbtn { flex-direction: column; gap: 2px; }
.colorbtn .bar { width: 17px; height: 3px; display: block; }
.yellow { background: #ffff00; }
.redbar { background: #ff0000; }
.font-c b { font-weight: 400; font-size: 11.500px; line-height: 13px; color: #ddd; }
.phon { font-size: 8px; color: #888; flex-direction: column; line-height: 9px; }
.phon em { color: #3b9ce0; font-style: normal; }
.g-align { width: 161px; padding-left: 10px; }
.dn { margin-top: 6px; }
.g-wrap { width: 148px; padding-left: 9px; font-size: 10.500px; }
.box2 { background: #3a3a3a; border-radius: 4px; height: 24px; display: flex; align-items: center; position: relative; white-space: nowrap; padding-left: 25px; flex: none; }
.btxt { flex: 1; }
.chw { width: 12px; height: 24px; background: #2e2e2e; border-radius: 0 4px 4px 0; display: flex; align-items: center; justify-content: center; flex: none; }
.box2 > svg:first-child { position: absolute; left: 5px; top: 5px; }
.box2 > svg.mrg { top: 4px; left: 4px; }
.ab { position: absolute; left: 5px; top: 2px; font-size: 9px; line-height: 9px; color: #bbb; }
.g-num { width: 176px; padding-left: 10px; }
.g-num .box { margin-right: 0; padding-left: 6px; }
.svgt { font-size: 7px; fill: #ddd; font-family: "Liberation Sans", sans-serif; }
.pct { font-size: 20px; font-weight: 300; color: #ccc; }
.dec { flex-direction: column; font-size: 9.500px; line-height: 10px; color: #ccc; align-items: flex-end; }
.dr { display: flex; align-items: center; }
.g-style { width: 110px; display: flex; padding-left: 13px; gap: 9px; }
.g-style::after { display: none; }
.col40 { width: 40px; flex: none; }
.big-ic { display: flex; align-items: center; gap: 4px; height: 31px; margin-bottom: 8px; }
.gallery { width: 379px; height: 58px; margin-top: 1px; background: #3d3d3d; border-radius: 3px; display: flex; align-items: center; justify-content: space-between; flex: none; padding: 0 5px; box-shadow: 0 1px 0 #4c4c4c; }
.gal-arrow { font-size: 15px; color: #ddd; width: 8px; }
.gal-grid { display: grid; grid-template-columns: 84px 85px 85px 85px; grid-template-rows: 20px 20px; column-gap: 1px; row-gap: 7px; }
.st { display: flex; align-items: center; padding-left: 4px; font-size: 12.500px; color: #000; background: #fff; }
.st-a { font-size: 10.500px; font-family: "Liberation Sans", sans-serif; }
.st-sel { outline: 1.500px solid #aaa; border-radius: 2px; font-size: 10.500px; }
.st-bad { background: #ffc7ce; color: #9c0006; }
.st-neu { background: #ffeb9c; color: #9c5700; }
.st-good { background: #c6efce; color: #006100; }
.st-warn { color: #ff0000; }
.st-calc { background: #f2f2f2; color: #fa7d00; border: 1px solid #7f7f7f; font-weight: 700; }
.st-note { background: #ffffcc; border: 1px solid #b2b2b2; font-size: 10.500px; }
.g-cells { width: 181px; padding-left: 19px; display: flex; }
.col50 { width: 50px; flex: none; }
.col50 .big-ic { justify-content: center; }
.g-edit { width: 200px; display: flex; }
.edit-list { display: flex; flex-direction: column; margin-left: 10px; width: 84px; }
.edit-item { flex: none; height: 22px; display: flex; align-items: center; gap: 7px; font-size: 10.500px; white-space: nowrap; }
.col42 { width: 42px; flex: none; margin-left: -1px; }
.col42 .big-ic { gap: 3px; }
.col42 .lbl { margin-left: 0; }
.find { margin-left: 11px; }
.find .lbl { margin-left: -2px; }
.g-add { padding-left: 2px; }
.g-add::after { display: none; }
.addin { display: block; margin: 3px 0 6px 12px; }

/* formula bar */
.formula { height: 28px; flex: none; display: flex; align-items: flex-start; background: #262626; border-bottom: 2px solid #d8d8d8; font-family: "Liberation Sans", sans-serif; }
.namebox { width: 85px; height: 23px; display: flex; align-items: center; justify-content: space-between; padding: 1px 0 0 10px; font-size: 12px; border-right: 1px solid #3a3a3a; flex: none; }
.stepper { width: 10px; display: flex; flex-direction: column; gap: 3px; margin-right: 4px; align-items: center; }
.up { border: 4px solid transparent; border-top: 0; border-bottom: 6px solid #bbb; width: 0; }
.down { border: 4px solid transparent; border-bottom: 0; border-top: 6px solid #bbb; width: 0; }
.fx-x, .fx-ok { width: 30px; height: 23px; line-height: 23px; text-align: center; color: #5c5c5c; font-size: 13px; flex: none; }
.fx-x { margin-left: 5px; }
.fx { width: 30px; height: 23px; text-align: center; color: #aaa; font: italic 16px/22px "Liberation Serif", serif; flex: none; }
.finput { flex: 1; height: 23px; background: #3a3a3a; display: flex; align-items: center; justify-content: space-between; padding-left: 8px; font-size: 12.500px; color: #eee; font-family: Inter, sans-serif; border-radius: 3px 0 0 3px; }
.ftext { padding-top: 2px; }
.fexpand { width: 22px; height: 23px; background: #222; position: relative; }
.fexpand::after { content: ""; position: absolute; left: 7px; top: 9px; border: 4px solid transparent; border-top: 6px solid #ccc; border-bottom: 0; }

/* sheet */
.sheet { height: 835px; flex: none; position: relative; overflow: hidden; background: #fff; color: #000; font-family: "Liberation Sans", Arial, sans-serif; font-size: 11px; }
.row { display: grid; grid-template-columns: 23px 30px 415px 141px 133px 161px 170px 168px 222px 251px 206px; }
.colhead { height: 23px; background: #1a1a1a; color: #fff; font-family: Inter, sans-serif; font-size: 11.500px; }
.corner { background: linear-gradient(135deg, #1a1a1a 50%, #5c5c5c 50%); border: 2px solid #1a1a1a; border-right-width: 1px; }
.ch-k { display: flex; align-items: center; justify-content: center; border-right: 1px solid #555; border-bottom: 1px solid #999; padding-bottom: 1px; }
.ch-k.act { background: #595959; border-right-color: #595959; border-bottom: 2px solid #217346; }
.ch-j { padding-left: 106px; }
.r5 { height: 5px; } .r7 { height: 7px; } .r8 { height: 8px; } .r9 { height: 9px; } .r19 { height: 19px; } .r20 { height: 20px; }
.r22 { height: 22px; } .r23 { height: 23px; } .r25 { height: 25px; } .r30 { height: 30px; } .r32 { height: 32px; } .r35 { height: 35px; }
.rh { grid-column: 1; background: #1a1a1a; color: #fff; font-family: Inter, sans-serif; font-size: 11.500px; border-bottom: 1px solid #777; display: flex; align-items: flex-end; justify-content: center; overflow: hidden; line-height: 14px; }
.rh.sel { background: #595959; border-right: 2px solid #217346; border-bottom: 0; }
.a { grid-column: 2; background: #fff; border-right: 1.500px solid #000; }
.a.noline { border-right: 0; }
.a-end { border-right: 0; border-bottom: 2px solid #000; }
.gridr { border-right: 1px solid #ddd; }
.cB, .cC, .cD, .cE, .cF, .cG, .cEG, .cEG-n, .cBG, .cBD { display: flex; align-items: center; white-space: nowrap; min-width: 0; }
.cB { grid-column: 3; padding-left: 3px; }
.cC { grid-column: 4; }
.cD { grid-column: 5; }
.cE { grid-column: 6; } .cF { grid-column: 7; } .cG { grid-column: 8; }
.cEG, .cEG-n { grid-column: 6 / 9; }
.cBG { grid-column: 3 / 9; }
.cBD { grid-column: 3 / 6; }
.gh, .gi, .gj { border-bottom: 1px solid #d4d4d4; border-right: 1px solid #d4d4d4; }
.gh { grid-column: 9; border-left: 2px solid #000; margin-left: -1px; }
.gh.nb { border-left: 0; margin-left: 0; }
.gi { grid-column: 10; }
.gj { grid-column: 11; }
.title { justify-content: center; font-size: 21.700px; font-weight: 700; padding-top: 4px; }
.subtitle { background: #ffcc99; border-right: 2px solid #000; border-bottom: 2px solid #000; padding: 2px 40px 0 3px; font-size: 12.500px; font-weight: 700; line-height: 17px; text-align: justify; white-space: normal; display: block; }
.subtitle sub { font-size: 8px; line-height: 0; }
.dbl, .dbl0 { border-top: 3px double #0000ff; }
.dbl { margin-top: -1px; }
.toc { font-family: "DejaVu Sans", sans-serif; font-weight: 700; font-size: 15px; padding: 0 0 3px 4px; }
.bold { font-weight: 700; font-size: 13px; padding-top: 2px; }
.lift { padding-top: 5px; }
.fin { padding-top: 0; padding-bottom: 3px; }
.link { font-weight: 700; font-size: 12px; text-decoration: underline; padding-top: 2px; }
.sect { align-items: flex-start; padding-top: 1px; }
.cEG-n { padding-left: 3px; }
.inp { background: #ffcc99; border: solid #000; border-width: 2px 2px 0 2px; justify-content: flex-end; padding-right: 1px; margin-left: -1px; }
.calc { background: #99ccff; }
.ye { background: #ffff99; border: 0; padding-left: 2px; }
.gr { background: #ccffcc; }
.f .cB, .f .inp, .f .ye { padding-bottom: 3px; }
.f .note-b { padding-bottom: 0; align-items: flex-start; line-height: 6px; }
.check { width: 14px; height: 14px; border: 1.500px solid #000; background: #fff; margin: 3px 0 0 16px; display: flex; align-items: center; justify-content: center; }
.chk-l { font-size: 8.500px; margin: 3px 0 0 2px; }
.npv-t { border: 1.500px solid #000; border-bottom-width: 1px; color: #d8d8d8; padding-left: 2px; display: flex; align-items: center; white-space: nowrap; border-left-width: 2px; }
.npv-v { border: 1.500px solid #000; border-top: 0; color: #d8d8d8; padding: 0 5px; display: flex; align-items: center; justify-content: space-between; border-left-width: 2px; }

/* floating objects */
.selection { position: absolute; left: 53px; top: 31px; width: 1188px; height: 32px; border: 2px solid #217346; }
.selection i { position: absolute; right: -4px; bottom: -4px; width: 6px; height: 6px; background: #217346; }
.xbtn { position: absolute; padding: 0; border: 1px solid #5c5cb8; border-radius: 5px; color: #fff; font: italic 12.800px "Liberation Sans", sans-serif; background: linear-gradient(#a6a6f2 0, #8a8aee 4px, #8888ee calc(100% - 5px), #6060b0 100%); text-shadow: 0 1px 1px #5555aa; }
.strong { font-weight: 700; font-size: 14px; }
.b-view { left: 749px; top: 64px; width: 191px; height: 37px; }
.b-proj { left: 359px; top: 130px; width: 159px; height: 36px; }
.b-key { left: 359px; top: 182px; width: 159px; height: 36px; }
.b-def { left: 359px; top: 230px; width: 159px; height: 42px; }
.chart { position: absolute; left: 552px; top: 119px; width: 685px; }
.chart-title { margin-left: 220.500px; display: flex; flex-direction: column; line-height: 14px; }
.chart-title b { font-size: 12.500px; }
.chart-title span { font-size: 10.800px; }
.plot { position: relative; margin-top: 4.300px; }
.plot::before { content: ""; position: absolute; left: 223.500px; top: 22px; width: 361px; height: 294px; background: repeating-linear-gradient(90deg, #efefef 0, #efefef 1px, transparent 1px, transparent 90px); }
.bar-row { height: 19.550px; display: flex; align-items: center; position: relative; }
.bl { width: 223.500px; flex: none; white-space: nowrap; font-size: 11px; color: #222; }
.b { display: block; height: 18px; flex: none; background: linear-gradient(#d4e5ff, #bcd5fb 70%, #a8c6f5); border: 1px solid #6d9ad8; margin-right: 6px; }
.b.green { background: linear-gradient(#a5c46d, #9aba62 50%, #6e8f3a); border: 1px solid #8a9d6a; }
.thin-g { width: 1px; border: 0; background: #6f8b45; margin-right: 7px; }
.thin-b { width: 1px; border: 0; background: #6d9ad8; margin-right: 7px; }
.none { width: 1px; border: 0; background: transparent; margin-right: 7px; }
.bar-row b { font-size: 10.500px; position: relative; }
.axis { display: grid; grid-template-columns: repeat(5, 90px); margin: 6px 0 0 176.500px; text-align: center; font-size: 10.500px; line-height: 14px; }
.axis span:first-child { padding-left: 0; padding-right: 3px; }
.freeze { position: absolute; left: 23px; right: 0; top: 173.500px; height: 1.500px; background: #a0a0a0; }

/* sheet tabs */
.sheet-tabs { height: 26px; flex: none; background: #3a3a3a; border-bottom: 3px solid #000; display: flex; align-items: flex-start; padding-top: 3px; font-size: 11.400px; font-family: Inter, sans-serif; color: #111; overflow: hidden; position: relative; }
.nav { width: 61px; height: 20px; display: flex; align-items: center; gap: 13px; padding-left: 14px; border-right: 1px solid #555; flex: none; }
.tri-l { border: 5px solid transparent; border-left: 0; border-right: 7px solid #bbb; }
.tri-r { border: 5px solid transparent; border-right: 0; border-left: 7px solid #bbb; }
.stab { height: 20px; display: block; flex: none; text-align: center; padding-top: 5px; line-height: 14px; overflow: hidden; white-space: nowrap; margin-left: 5px; position: relative; }
.pf { width: 101px; margin-left: 0; background: linear-gradient(90deg, #3a3a3a 0, #ccffcc 45%); }
.stab-wrap { width: 157px; height: 23px; margin: -3px 0 0 2px; background: #fff; padding: 3px 2px 0; flex: none; }
.active { margin: 0; width: 153px; height: 18px; padding-top: 2px; background: linear-gradient(#fff, #c4e8a0); color: #5aa500; font-size: 11.700px; }
.lime { background: #99cc00; }
.sky { background: #99ccff; }
.gold { background: #ffcc00; }
.t-rep { width: 137px; margin-left: 4px; } .t-cap { width: 101px; } .t-pla { width: 100px; margin-left: 6px; }
.t-car { width: 150px; } .t-res { width: 75px; } .t-tor { width: 205px; } .t-cas { width: 136px; margin-left: 6px; }
.t-ene { width: 184px; margin-left: 7px; } .t-non { width: 180px; margin-left: 6px; } .t-aeo { width: 82px; margin-left: 9px; }
.t-hya { width: 116px; text-align: left; padding-left: 19px; }
.fade { position: absolute; right: 0; top: 0; width: 34px; height: 20px; background: linear-gradient(90deg, transparent, #3a3a3a); }
.plus { width: 34px; margin-left: 3px; height: 20px; text-align: center; color: #ccc; font-size: 17px; line-height: 18px; border-left: 1px solid #555; border-right: 1px solid #555; }

/* status bar */
.status { height: 28px; flex: none; background: #262626; display: flex; align-items: center; font-size: 11px; color: #ccc; border-bottom: 1px solid #555; }
.s-ready { margin-left: 24px; }
.s-calc { margin-left: 20px; }
.s-ic { margin-left: 21px; }
.s-acc { margin-left: 5px; }
.s-right { margin-left: auto; display: flex; align-items: center; padding-right: 26px; }
.view { width: 29px; height: 23px; display: flex; align-items: center; justify-content: center; border-radius: 3px; margin-right: 7px; }
.view.on { background: #555; }
.zm { width: 14px; text-align: center; font-size: 15px; color: #bbb; }
.slider { width: 100px; height: 5px; background: #777; border-radius: 3px; position: relative; margin: 0 4px; }
.slider i { position: absolute; left: 43px; top: -7px; width: 15px; height: 17px; border-radius: 50%; background: #999; }
.pctz { margin-left: 14px; font-size: 11.500px; }
```
